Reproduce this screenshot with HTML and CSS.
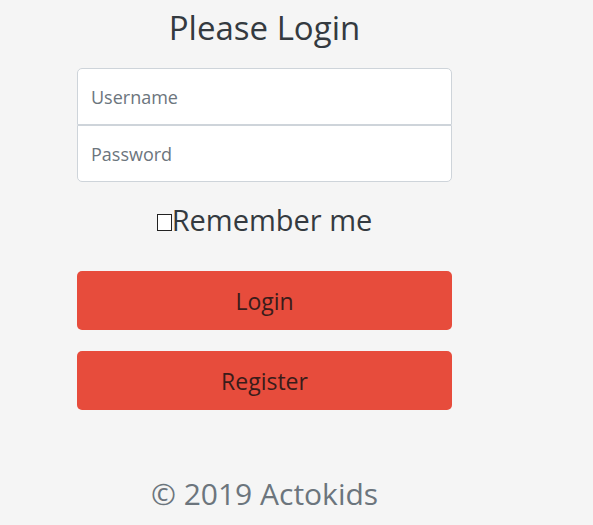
FILE: index.html
```html
<!DOCTYPE html>
<html>
<head>
<meta charset="utf-8">
<link rel="stylesheet" href="styles.css">
</head>
<body>
<main class="page">
  <form class="signin">
    <h1 class="title">Please Login</h1>
    <div class="fields">
      <input class="field field-top" type="text" placeholder="Username">
      <input class="field field-bottom" type="password" placeholder="Password">
    </div>
    <label class="remember"><span class="box"></span>Remember me</label>
    <button class="btn" type="button">Login</button>
    <button class="btn" type="button">Register</button>
    <p class="copy">© 2019 Actokids</p>
  </form>
</main>
</body>
</html>
```
FILE: styles.css
```css
html, body {
  margin: 0;
  padding: 0;
  background: #f5f5f5;
}
body {
  font-family: "Open Sans", "Noto Sans", sans-serif;
  color: #212529;
}
.page {
  padding-left: 77px;
}
.signin {
  width: 375px;
  display: flex;
  flex-direction: column;
  align-items: stretch;
}
.title {
  margin: 6px 0 0;
  font-size: 33px;
  font-weight: 400;
  line-height: 44px;
  text-align: center;
  color: #343a40;
}
.fields {
  margin-top: 18px;
  display: flex;
  flex-direction: column;
}
.field {
  box-sizing: border-box;
  height: 57px;
  margin: 0;
  padding: 0 13px;
  border: 1px solid #ced4da;
  background: #fff;
  font-family: inherit;
  font-size: 18px;
  color: #495057;
  outline: none;
}
.field::placeholder {
  color: #6c757d;
}
.field-top {
  border-radius: 5px 5px 0 0;
}
.field-bottom {
  border-radius: 0 0 5px 5px;
}
.remember {
  margin-top: 19px;
  display: flex;
  align-items: center;
  justify-content: center;
  font-size: 29px;
  line-height: 38px;
  color: #343a40;
}
.box {
  display: inline-block;
  box-sizing: border-box;
  width: 15px;
  height: 17px;
  border: 1px solid #222;
  background: #fff;
  margin-top: 4px;
}
.btn {
  box-sizing: border-box;
  height: 59px;
  margin: 0;
  padding-top: 2px;
  border: none;
  border-radius: 5px;
  background: #e74c3c;
  font-family: inherit;
  font-size: 23px;
  color: #3a1c1a;
}
.remember + .btn {
  margin-top: 32px;
}
.btn + .btn {
  margin-top: 21px;
}
.copy {
  margin: 65px 0 0;
  text-align: center;
  font-size: 30px;
  line-height: 38px;
  color: #6c757d;
}
```
